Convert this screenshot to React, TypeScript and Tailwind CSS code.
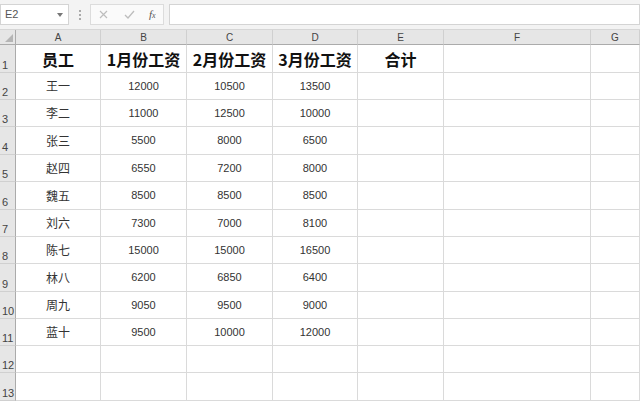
import React from 'react';

const cols = ['A', 'B', 'C', 'D', 'E', 'F', 'G'];

const head = ['员工', '1月份工资', '2月份工资', '3月份工资', '合计'];

const data: (string | number)[][] = [
  ['王一', 12000, 10500, 13500],
  ['李二', 11000, 12500, 10000],
  ['张三', 5500, 8000, 6500],
  ['赵四', 6550, 7200, 8000],
  ['魏五', 8500, 8500, 8500],
  ['刘六', 7300, 7000, 8100],
  ['陈七', 15000, 15000, 16500],
  ['林八', 6200, 6850, 6400],
  ['周九', 9050, 9500, 9000],
  ['蓝十', 9500, 10000, 12000],
];

const cjk = "font-['Noto_Sans_CJK_SC',sans-serif]";
const num = "font-['Liberation_Sans','Noto_Sans_CJK_SC',sans-serif]";

// toolbar with name box and formula input
const FormulaBar = () => (
  <div className="flex h-[30px] items-center gap-0 border-b border-[#d6d6d6] bg-[#f3f3f3]">
    <div className="flex h-[21px] w-[69px] items-center justify-between border border-[#d4d4d4] bg-white pl-[4px] pr-[5px]">
      <span className={`${num} text-[11px] text-[#555]`}>E2</span>
      <svg width="6" height="4" viewBox="0 0 6 4">
        <path d="M0 0h6L3 4z" fill="#777" />
      </svg>
    </div>
    <div className="flex w-[21px] flex-col items-center justify-center gap-[2px]">
      <span className="h-[2px] w-[2px] bg-[#aaa]" />
      <span className="h-[2px] w-[2px] bg-[#aaa]" />
      <span className="h-[2px] w-[2px] bg-[#aaa]" />
    </div>
    <div className="flex h-[21px] w-[74px] items-center border border-[#dcdcdc] bg-[#fafafa]">
      <svg className="ml-[8px]" width="9" height="9" viewBox="0 0 9 9">
        <path d="M1 1l7 7M8 1L1 8" stroke="#bdbdbd" strokeWidth="1.2" />
      </svg>
      <svg className="ml-[16px]" width="11" height="9" viewBox="0 0 11 9">
        <path d="M1 5l3 3 6-7" stroke="#bdbdbd" strokeWidth="1.3" fill="none" />
      </svg>
      <span className="ml-[14px] font-['Liberation_Serif',serif] text-[11px] italic leading-none text-[#555]">
        f<span className="text-[8px]">x</span>
      </span>
    </div>
    <div className="ml-[5px] h-[21px] flex-1 border border-[#d4d4d4] bg-white" />
  </div>
);

const Corner = () => (
  <div className="relative border-b border-r border-[#ababab] bg-[#e6e6e6]">
    <svg className="absolute bottom-[2px] right-[2px]" width="8" height="8" viewBox="0 0 8 8">
      <path d="M8 0v8H0z" fill="#b5b5b5" />
    </svg>
  </div>
);

export default function App() {
  const rows: (string | number)[][] = [head, ...data, [], []];

  return (
    <div className="h-[401px] w-[640px] overflow-hidden bg-white">
      <FormulaBar />
      <div className="grid grid-cols-[16px_85px_86px_86px_85px_86px_147px_1fr] grid-rows-[15px_28px_27px_27px_28px_27px_28px_27px_27px_28px_27px_27px_27px_28px]">
        <Corner />
        {cols.map((c) => (
          <div
            key={c}
            className={`flex items-center justify-center border-b border-r border-[#ababab] border-r-[#d0d0d0] bg-[#e6e6e6] ${num} text-[10px] text-[#444]`}
          >
            {c}
          </div>
        ))}
        {rows.map((r, i) => (
          <React.Fragment key={i}>
            <div
              className={`flex items-end border-b border-r border-[#d0d0d0] border-r-[#ababab] bg-[#e6e6e6] pb-[1px] pl-[2px] ${num} text-[11px] leading-none text-[#444]`}
            >
              {i + 1}
            </div>
            {cols.map((c, j) => {
              const v = r[j];
              const isHead = i === 0;
              return (
                <div
                  key={c}
                  className={`flex items-center justify-center border-b border-r border-[#dadada] ${
                    isHead
                      ? `${cjk} text-[16px] font-bold text-[#111]`
                      : typeof v === 'number'
                        ? `${num} text-[11px] text-[#333]`
                        : `${cjk} text-[12px] text-[#333]`
                  }`}
                >
                  {v ?? ''}
                </div>
              );
            })}
          </React.Fragment>
        ))}
      </div>
    </div>
  );
}
